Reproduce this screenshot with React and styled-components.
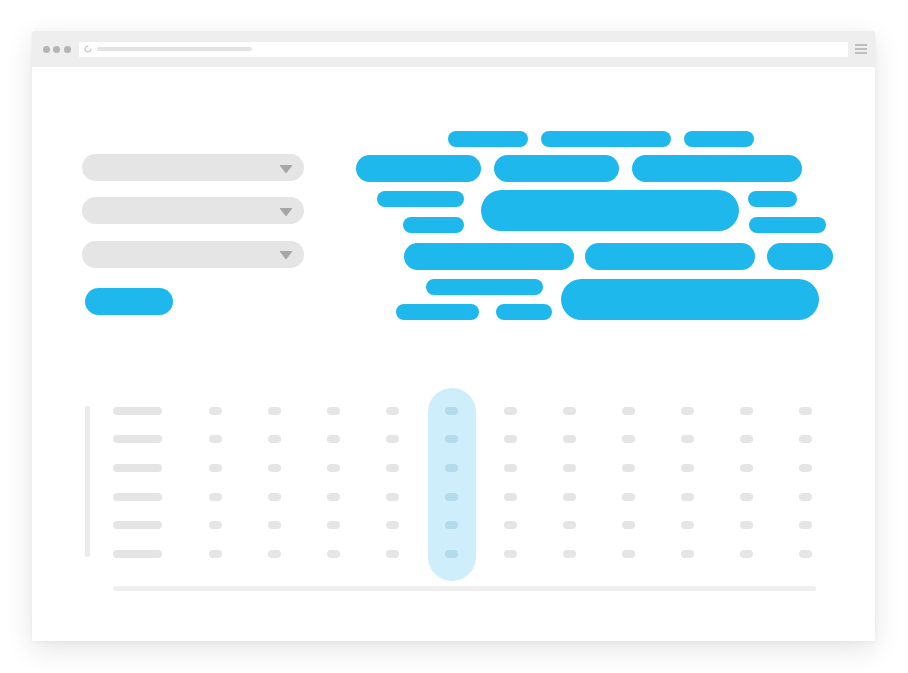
import React from "react";
import styled, { createGlobalStyle } from "styled-components";

const BLUE = "#1fb8ec";
const GRAY = "#e5e5e5";

const GlobalStyle = createGlobalStyle`
  html, body {
    margin: 0;
    padding: 0;
    background: #ffffff;
    font-family: "Liberation Sans", Arial, sans-serif;
  }
`;

const Page = styled.div`
  width: 908px;
  height: 673px;
  padding: 31px 33px 0 32px;
  box-sizing: border-box;
  overflow: hidden;
`;

const Window = styled.div`
  width: 843px;
  height: 610px;
  background: #fff;
  border-radius: 3px 3px 0 0;
  box-shadow: 0 8px 28px rgba(0, 0, 0, 0.11), 0 1px 4px rgba(0, 0, 0, 0.04);
  display: flex;
  flex-direction: column;
`;

const TitleBar = styled.div`
  height: 36px;
  background: #eeeeee;
  border-radius: 3px 3px 0 0;
  display: flex;
  align-items: center;
  padding: 0 8px 0 11px;
  box-sizing: border-box;
`;

const Dots = styled.div`
  display: flex;
  gap: 3.3px;
  margin-right: 8px;
`;

const Dot = styled.span`
  width: 7px;
  height: 7px;
  border-radius: 50%;
  background: #b4b4b4;
`;

const AddressBar = styled.div`
  flex: 1;
  height: 15px;
  background: #fff;
  border-radius: 1px;
  display: flex;
  align-items: center;
  padding-left: 5px;
  box-sizing: border-box;
  gap: 5px;
`;

const UrlLine = styled.span`
  width: 155px;
  height: 4.5px;
  border-radius: 3px;
  background: #e3e3e3;
`;

const Hamburger = styled.div`
  margin-left: 7.5px;
  width: 12px;
  display: flex;
  flex-direction: column;
  gap: 2.3px;
`;

const HamLine = styled.span`
  height: 2px;
  background: #bdbdbd;
`;

const Content = styled.div`
  flex: 1;
  padding: 64px 0 0 50px;
  display: flex;
  flex-direction: column;
`;

const TopSection = styled.div`
  display: flex;
  align-items: flex-start;
`;

const Form = styled.div`
  width: 222px;
  padding-top: 23px;
  display: flex;
  flex-direction: column;
  gap: 16.4px;
`;

const Select = styled.div`
  height: 27px;
  border-radius: 14px;
  background: ${GRAY};
  display: flex;
  align-items: center;
  justify-content: flex-end;
  padding: 2px 11.5px 0 0;
  box-sizing: border-box;
`;

const SubmitButton = styled.div`
  width: 88px;
  height: 27px;
  border-radius: 14px;
  background: ${BLUE};
  margin: 4px 0 0 2.5px;
`;

const Cloud = styled.div`
  margin-left: 52px;
  width: 477px;
  display: flex;
  flex-direction: column;
`;

const CloudRow = styled.div`
  display: flex;
  align-items: flex-start;
  margin-top: ${(p) => p.$mt || 0}px;
`;

const CloudCol = styled.div`
  display: flex;
  flex-direction: column;
  align-items: ${(p) => p.$align || "flex-start"};
  gap: ${(p) => p.$gap || 10}px;
  width: ${(p) => (p.$w ? `${p.$w}px` : "auto")};
  margin-left: ${(p) => p.$ml || 0}px;
  padding-top: ${(p) => p.$pt || 0}px;
`;

const Pill = styled.div`
  flex-shrink: 0;
  width: ${(p) => p.$w}px;
  height: ${(p) => p.$h}px;
  border-radius: ${(p) => p.$h / 2}px;
  margin-left: ${(p) => p.$ml || 0}px;
  background: ${BLUE};
`;

const TableSection = styled.div`
  margin-top: 68px;
  display: flex;
  flex-direction: column;
`;

const Table = styled.div`
  display: flex;
  align-items: flex-start;
`;

const VBar = styled.div`
  width: 4.5px;
  height: 151px;
  margin: 17.7px 0 0 3px;
  border-radius: 2px;
  background: #ebebeb;
`;

const Column = styled.div`
  display: flex;
  flex-direction: column;
  align-items: ${(p) => (p.$label ? "flex-start" : "center")};
  width: ${(p) => (p.$label ? 49 : 48)}px;
  height: 193px;
  box-sizing: border-box;
  padding-top: 18.7px;
  gap: 20.7px;
  border-radius: 24px;
  margin-left: ${(p) => p.$ml}px;
  background: ${(p) => (p.$active ? "#cdeefa" : "transparent")};
`;

const RowLabel = styled.span`
  width: 49px;
  height: 8px;
  border-radius: 4px;
  background: ${GRAY};
`;

const Cell = styled.span`
  width: 12.5px;
  height: 8px;
  border-radius: 4px;
  background: ${(p) => (p.$active ? "#b4dbe9" : GRAY)};
`;

const ScrollBar = styled.div`
  width: 703px;
  height: 5px;
  border-radius: 3px;
  margin: 4.7px 0 0 31px;
  background: #efefef;
`;

const Caret = () => (
  <svg width="14" height="10" viewBox="0 0 14 10">
    <path
      d="M1.5 1 L12.5 1 Q13.5 1 12.9 2 L7.8 8.6 Q7 9.6 6.2 8.6 L1.1 2 Q0.5 1 1.5 1 Z"
      fill="#a6a6a6"
    />
  </svg>
);

const Spinner = () => (
  <svg width="8" height="8" viewBox="0 0 8 8">
    <path
      d="M4 1 A3 3 0 1 0 7 4"
      fill="none"
      stroke="#c4c4c4"
      strokeWidth="1.2"
      strokeLinecap="round"
    />
  </svg>
);

const ROWS = 6;
const COLS = 11;
const ACTIVE_COL = 4;

function App() {
  return (
    <>
      <GlobalStyle />
      <Page>
        <Window>
          <TitleBar>
            <Dots>
              <Dot />
              <Dot />
              <Dot />
            </Dots>
            <AddressBar>
              <Spinner />
              <UrlLine />
            </AddressBar>
            <Hamburger>
              <HamLine />
              <HamLine />
              <HamLine />
            </Hamburger>
          </TitleBar>

          <Content>
            <TopSection>
              <Form>
                <Select>
                  <Caret />
                </Select>
                <Select>
                  <Caret />
                </Select>
                <Select>
                  <Caret />
                </Select>
                <SubmitButton />
              </Form>

              <Cloud>
                <CloudRow>
                  <Pill $ml={91.7} $w={80} $h={16} />
                  <Pill $ml={13.3} $w={130} $h={16} />
                  <Pill $ml={13} $w={70} $h={16} />
                </CloudRow>
                <CloudRow $mt={8}>
                  <Pill $w={125} $h={27} />
                  <Pill $ml={13} $w={125} $h={27} />
                  <Pill $ml={13} $w={170} $h={27} />
                </CloudRow>
                <CloudRow $mt={8}>
                  <CloudCol $w={108} $align="flex-end" $pt={1}>
                    <Pill $w={87} $h={16} />
                    <Pill $w={61} $h={16} />
                  </CloudCol>
                  <Pill $ml={17} $w={258} $h={41} />
                  <CloudCol $ml={8.5} $pt={1}>
                    <Pill $w={49} $h={16} />
                    <Pill $ml={1} $w={77} $h={16} />
                  </CloudCol>
                </CloudRow>
                <CloudRow $mt={10}>
                  <Pill $ml={48} $w={170} $h={27} />
                  <Pill $ml={11} $w={170} $h={27} />
                  <Pill $ml={12} $w={66} $h={27} />
                </CloudRow>
                <CloudRow $mt={9}>
                  <CloudCol $gap={9}>
                    <Pill $ml={70} $w={117} $h={16} />
                    <CloudRow>
                      <Pill $ml={40} $w={83} $h={16} />
                      <Pill $ml={17} $w={56} $h={16} />
                    </CloudRow>
                  </CloudCol>
                  <Pill $ml={9} $w={258} $h={41} />
                </CloudRow>
              </Cloud>
            </TopSection>

            <TableSection>
              <Table>
                <VBar />
                <Column $label $ml={23.5}>
                  {Array.from({ length: ROWS }, (_, r) => (
                    <RowLabel key={r} />
                  ))}
                </Column>
                {Array.from({ length: COLS }, (_, c) => (
                  <Column key={c} $ml={c === 0 ? 29.5 : 11} $active={c === ACTIVE_COL}>
                    {Array.from({ length: ROWS }, (_, r) => (
                      <Cell key={r} $active={c === ACTIVE_COL} />
                    ))}
                  </Column>
                ))}
              </Table>
              <ScrollBar />
            </TableSection>
          </Content>
        </Window>
      </Page>
    </>
  );
}

export default App;
